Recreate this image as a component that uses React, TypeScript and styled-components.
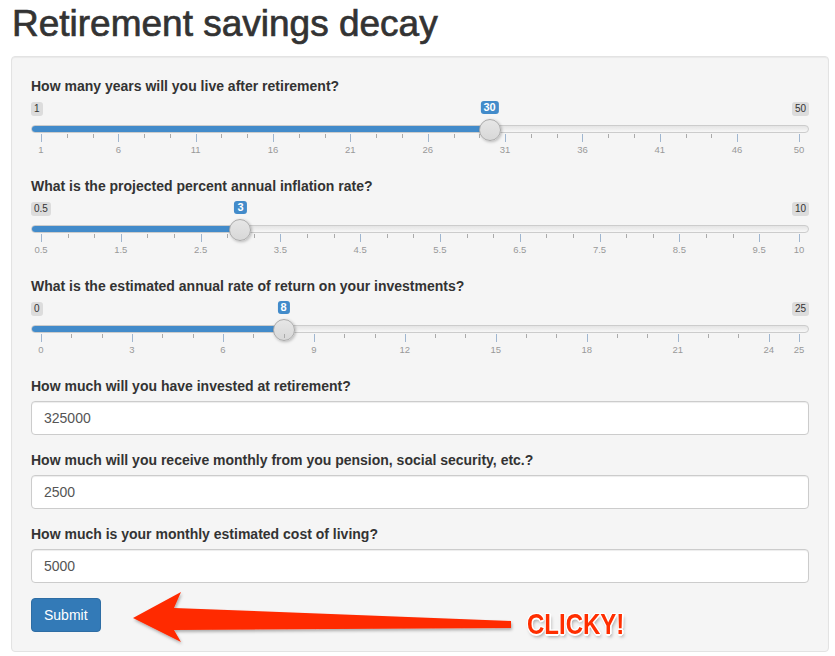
import React from 'react';
import styled, { createGlobalStyle } from 'styled-components';

const GlobalStyle = createGlobalStyle`
  html, body { margin: 0; padding: 0; background: #ffffff; }
  body {
    font-family: "Liberation Sans", Arial, sans-serif;
    font-size: 14px;
    line-height: 1.42857;
    color: #333333;
  }
  * { box-sizing: border-box; }
`;

const Page = styled.div`
  position: relative;
  padding: 0 6px 4px 11px;
`;

const Title = styled.h1`
  margin: 4px 0 11px 1px;
  font-size: 37px;
  font-weight: 400;
  line-height: 1.1;
  color: #333333;
  -webkit-text-stroke: 0.7px #333333;
`;

const Well = styled.form`
  background: #f5f5f5;
  border: 1px solid #e3e3e3;
  border-radius: 4px;
  padding: 19px;
  box-shadow: inset 0 1px 1px rgba(0, 0, 0, 0.05);
`;

const FormGroup = styled.div`
  margin-bottom: 15px;
`;

const Label = styled.label`
  display: block;
  font-weight: 700;
  font-size: 14px;
  line-height: 20px;
  margin-bottom: 5px;
  color: #333333;
`;

const SliderBox = styled.div`
  position: relative;
  height: 60px;
`;

const Ends = styled.div`
  display: flex;
  justify-content: space-between;
  align-items: flex-start;
  height: 24px;
  padding-top: 1px;
`;

const EndBadge = styled.span`
  font-size: 10px;
  line-height: 12px;
  padding: 1px 3px;
  background: rgba(0, 0, 0, 0.1);
  border-radius: 3px;
  color: #333333;
`;

const Track = styled.div`
  position: relative;
  height: 8px;
  border: 1px solid #cccccc;
  border-radius: 8px;
  background: linear-gradient(#e4e4e4, #f7f7f7);
  overflow: hidden;
`;

const Bar = styled.div`
  height: 100%;
  background: #428bca;
`;

const Handle = styled.span`
  position: absolute;
  top: 18px;
  width: 22px;
  height: 22px;
  margin-left: -11px;
  border-radius: 50%;
  border: 1px solid #aaaaaa;
  background: linear-gradient(#e6e6e6, #d8d8d8);
  box-shadow: 1px 1px 3px rgba(0, 0, 0, 0.25);
`;

const ValueBadge = styled.span`
  position: absolute;
  top: 0;
  transform: translateX(-50%);
  font-size: 11px;
  font-weight: 700;
  line-height: 11px;
  padding: 1px 3px;
  background: #428bca;
  color: #ffffff;
  border-radius: 3px;
`;

const Grid = styled.div`
  position: relative;
  margin: 1px 10px 0;
  height: 27px;
`;

const Tick = styled.span<{ $big?: boolean }>`
  position: absolute;
  top: 0;
  width: 1px;
  height: ${(p) => (p.$big ? 8 : 4)}px;
  background: ${(p) => (p.$big ? '#9fb6d0' : '#aaaaaa')};
`;

const TickLabel = styled.span`
  position: absolute;
  top: 10px;
  transform: translateX(-50%);
  font-size: 9.5px;
  line-height: 12px;
  color: #999999;
  white-space: nowrap;
`;

const Input = styled.input`
  display: block;
  width: 100%;
  height: 34px;
  padding: 6px 12px;
  font-family: inherit;
  font-size: 14px;
  line-height: 20px;
  color: #555555;
  background: #ffffff;
  border: 1px solid #cccccc;
  border-radius: 4px;
  box-shadow: inset 0 1px 1px rgba(0, 0, 0, 0.075);
  outline: none;
`;

const Button = styled.button`
  display: inline-block;
  height: 34px;
  padding: 6px 12px;
  font-family: inherit;
  font-size: 14px;
  line-height: 20px;
  color: #ffffff;
  background: #337ab7;
  border: 1px solid #2e6da4;
  border-radius: 4px;
  cursor: pointer;
`;

const ArrowLayer = styled.svg`
  position: absolute;
  left: 0;
  top: 0;
  pointer-events: none;
`;

const Clicky = styled.span`
  position: absolute;
  left: 527px;
  top: 603px;
  font-family: "Liberation Sans", Arial, sans-serif;
  font-weight: 700;
  font-size: 30px;
  line-height: 34px;
  color: #ff2e00;
  transform: scaleX(0.8);
  transform-origin: left center;
  text-shadow: -1px -1px 0 #fff, 1px -1px 0 #fff, -1px 1px 0 #fff, 1px 1px 0 #fff,
    0 2px 0 #fff, 2px 0 0 #fff, 2px 3px 4px rgba(0, 0, 0, 0.35);
  pointer-events: none;
`;

type SliderSpec = {
  min: number;
  max: number;
  value: number;
  step: number;
};

function fmt(n: number) {
  return String(Math.round(n * 1000) / 1000);
}

function Slider({ min, max, value, step }: SliderSpec) {
  const span = max - min;
  const pct = (v: number) => ((v - min) / span) * 100;
  const big: number[] = [];
  for (let v = min; v < max - 1e-9; v += step) big.push(v);
  big.push(max);
  const small: number[] = [];
  for (let i = 0; i < big.length - 1; i++) {
    const a = big[i];
    const b = big[i + 1];
    if (b - a < step - 1e-9) continue;
    small.push(a + step / 3, a + (2 * step) / 3);
  }
  const p = (value - min) / span;
  const pos = `calc(10px + ${p} * (100% - 20px))`;
  return (
    <SliderBox>
      <Ends>
        <EndBadge>{fmt(min)}</EndBadge>
        <EndBadge>{fmt(max)}</EndBadge>
      </Ends>
      <Track>
        <Bar style={{ width: `calc(9px + ${p} * (100% - 18px))` }} />
      </Track>
      <Handle style={{ left: pos }} />
      <ValueBadge style={{ left: pos }}>{fmt(value)}</ValueBadge>
      <Grid>
        {small.map((v, i) => (
          <Tick key={'s' + i} style={{ left: `${pct(v)}%` }} />
        ))}
        {big.map((v, i) => (
          <Tick key={'b' + i} $big style={{ left: `${pct(v)}%` }} />
        ))}
        {big.map((v, i) => (
          <TickLabel key={'l' + i} style={{ left: `${pct(v)}%` }}>
            {fmt(v)}
          </TickLabel>
        ))}
      </Grid>
    </SliderBox>
  );
}

export default function App() {
  return (
    <Page>
      <GlobalStyle />
      <Title>Retirement savings decay</Title>
      <Well onSubmit={(e) => e.preventDefault()}>
        <FormGroup>
          <Label>How many years will you live after retirement?</Label>
          <Slider min={1} max={50} value={30} step={5} />
        </FormGroup>
        <FormGroup>
          <Label>What is the projected percent annual inflation rate?</Label>
          <Slider min={0.5} max={10} value={3} step={1} />
        </FormGroup>
        <FormGroup>
          <Label>What is the estimated annual rate of return on your investments?</Label>
          <Slider min={0} max={25} value={8} step={3} />
        </FormGroup>
        <FormGroup>
          <Label>How much will you have invested at retirement?</Label>
          <Input defaultValue="325000" />
        </FormGroup>
        <FormGroup>
          <Label>How much will you receive monthly from you pension, social security, etc.?</Label>
          <Input defaultValue="2500" />
        </FormGroup>
        <FormGroup>
          <Label>How much is your monthly estimated cost of living?</Label>
          <Input defaultValue="5000" />
        </FormGroup>
        <Button type="submit">Submit</Button>
      </Well>
      <ArrowLayer width="835" height="656" viewBox="0 0 835 656">
        <defs>
          <filter id="sh" x="-10%" y="-30%" width="120%" height="160%">
            <feDropShadow dx="1" dy="2" stdDeviation="1.5" floodColor="#000" floodOpacity="0.3" />
          </filter>
        </defs>
        <path
          d="M133 614 L181 588 L174 604 L511 617 L511 624 L174 626 L181 638 Z"
          fill="#ff2a00"
          filter="url(#sh)"
        />
      </ArrowLayer>
      <Clicky>CLICKY!</Clicky>
    </Page>
  );
}
